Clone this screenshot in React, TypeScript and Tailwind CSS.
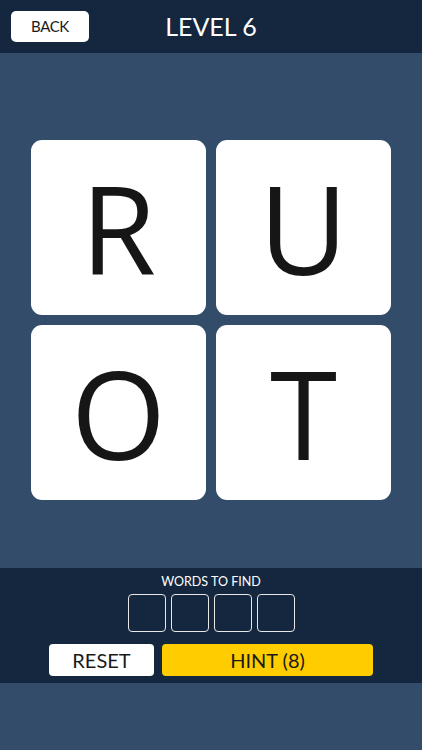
const tiles = ["R", "U", "O", "T"];

export default function App() {
  return (
    <div className="flex h-[750px] w-[422px] flex-col bg-[#324c69] font-['Lato',sans-serif]">
      <header className="relative flex h-[53px] shrink-0 items-center justify-center bg-[#15273e]">
        <button className="absolute left-[11px] top-[11px] flex h-[31px] w-[78px] items-center justify-center rounded-[5px] bg-white text-[15px] tracking-tight text-[#1a1a1a]">
          BACK
        </button>
        <h1 className="text-[25px] font-normal text-white">LEVEL 6</h1>
      </header>

      <main className="flex h-[515px] shrink-0 items-start justify-center pt-[87px]">
        <div className="grid grid-cols-[175px_175px] grid-rows-[175px_175px] gap-[10px]">
          {tiles.map((letter) => (
            <div
              key={letter}
              className="flex items-center justify-center rounded-[11px] bg-white font-['Open_Sans',sans-serif] text-[122px] font-medium leading-none text-[#161616]"
            >
              {letter}
            </div>
          ))}
        </div>
      </main>

      <section className="flex h-[115px] shrink-0 flex-col items-center bg-[#15273e] pt-[7px]">
        <p className="text-[12.5px] leading-[14px] text-white">WORDS TO FIND</p>
        <div className="mt-[5px] flex gap-[5px]">
          {[0, 1, 2, 3].map((i) => (
            <div
              key={i}
              className="h-[38px] w-[38px] rounded-[4px] border-[1.5px] border-[#e8e8e8]"
            />
          ))}
        </div>
        <div className="mt-[12px] flex gap-[8px]">
          <button className="flex h-[32px] w-[105px] items-center justify-center rounded-[4px] bg-white text-[20px] text-[#1a1a1a]">
            RESET
          </button>
          <button className="flex h-[32px] w-[211px] items-center justify-center rounded-[4px] bg-[#ffcc00] text-[20px] text-[#1a1a1a]">
            HINT (8)
          </button>
        </div>
      </section>
    </div>
  );
}
